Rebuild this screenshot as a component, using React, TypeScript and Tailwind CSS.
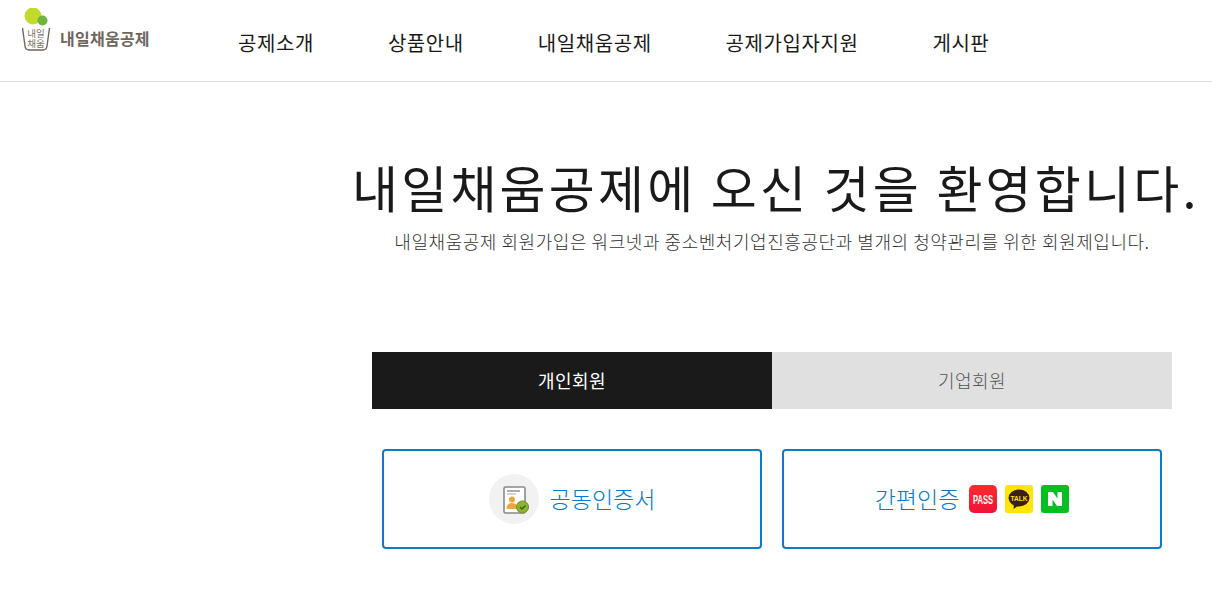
const font = "font-['Noto_Sans_CJK_KR','Noto_Sans',sans-serif]";

function Logo() {
  return (
    <div className="flex items-start w-[238px] pl-[22px] pt-[8px] shrink-0">
      <svg width="30" height="44" viewBox="0 0 30 44" className="shrink-0">
        <path d="M0.5 20 L3 38 Q3.5 42 7 42 H21 Q24.5 42 25 38 L27.5 20" fill="none" stroke="#6f665e" strokeWidth="1.4" />
        <circle cx="11" cy="8" r="8.5" fill="#c2d92e" />
        <circle cx="20.5" cy="12.5" r="5" fill="#6eb43f" />
        <text x="14" y="28.5" textAnchor="middle" fontSize="9.5" fill="#7c7268">내일</text>
        <text x="14" y="38.5" textAnchor="middle" fontSize="9.5" fill="#7c7268">채움</text>
      </svg>
      <span className="ml-[8px] mt-[18px] text-[16px] leading-[24px] font-bold text-[#6f665e] tracking-[0.25px] whitespace-nowrap">
        내일채움공제
      </span>
    </div>
  );
}

function CertIcon() {
  return (
    <div className="w-[50px] h-[50px] rounded-full bg-[#f2f2f2] flex items-center justify-center">
      <svg width="30" height="30" viewBox="0 0 30 30">
        <rect x="5" y="3" width="21" height="26" rx="1.5" fill="#fff" stroke="#8a8a8a" strokeWidth="1.6" />
        <path d="M8 7 H21" stroke="#777" strokeWidth="1.2" />
        <path d="M8 10 H17" stroke="#aaa" strokeWidth="1" />
        <circle cx="13" cy="15.5" r="3" fill="#f0a63c" />
        <path d="M7.5 25 Q7.5 19 13 19 Q18.5 19 18.5 25 Z" fill="#f0a63c" />
        <circle cx="23.5" cy="23" r="6" fill="#8db52f" stroke="#6d8f22" />
        <path d="M21 23 L23 25 L26.5 21.5" fill="none" stroke="#3f5a10" strokeWidth="1.4" />
      </svg>
    </div>
  );
}

function PassIcon() {
  return (
    <div className="w-[28px] h-[28px] rounded-[5px] bg-gradient-to-b from-[#ff2a2a] to-[#f0103a]">
      <svg width="28" height="28" viewBox="0 0 28 28" className="overflow-visible">
        <text x="14" y="18.5" textAnchor="middle" fontSize="12.5" fontWeight="700" fill="#fff" textLength="20" lengthAdjust="spacingAndGlyphs" fontFamily="Liberation Sans, sans-serif">PASS</text>
      </svg>
    </div>
  );
}

function TalkIcon() {
  return (
    <div className="w-[28px] h-[28px] rounded-[3px] bg-[#ffe600] flex items-center justify-center">
      <svg width="24" height="24" viewBox="0 0 24 24" className="overflow-visible">
        <ellipse cx="12" cy="11" rx="10.5" ry="8.5" fill="#3c1e1e" />
        <path d="M7 17 L6.5 22 L12 18 Z" fill="#3c1e1e" />
        <text x="12" y="14" textAnchor="middle" fontSize="8" fontWeight="700" fill="#ffe600" textLength="17" lengthAdjust="spacingAndGlyphs" fontFamily="Liberation Sans, sans-serif">TALK</text>
      </svg>
    </div>
  );
}

function NaverIcon() {
  return (
    <div className="w-[28px] h-[28px] rounded-[3px] bg-[#03c01f] flex items-center justify-center">
      <svg width="16" height="16" viewBox="0 0 16 16">
        <path d="M1 1 H6 L10.5 7.5 V1 H15 V15 H10 L5.5 8.5 V15 H1 Z" fill="#fff" />
      </svg>
    </div>
  );
}

const menus = ["공제소개", "상품안내", "내일채움공제", "공제가입자지원", "게시판"];

export default function App() {
  return (
    <div className={`w-[1212px] h-[600px] overflow-hidden bg-white ${font}`}>
      <header className="flex h-[82px] border-b border-[#e0e0e0]">
        <Logo />
        <nav className="flex gap-[74px] pt-[28px]">
          {menus.map((m) => (
            <a key={m} className="text-[20px] leading-[30px] text-[#1a1a1a] tracking-[0.57px] whitespace-nowrap">
              {m}
            </a>
          ))}
        </nav>
      </header>

      <main className="ml-[372px] w-[800px]">
        <h1 className="mt-[69px] ml-[-20px] w-[841px] text-[50px] leading-[70px] font-normal text-[#1a1a1a] tracking-[3.2px] whitespace-nowrap">
          내일채움공제에 오신 것을 환영합니다.
        </h1>
        <p className="text-center text-[18px] leading-[30px] font-light text-[#333] tracking-[0.55px] mt-[5px]">
          내일채움공제 회원가입은 워크넷과 중소벤처기업진흥공단과 별개의 청약관리를 위한 회원제입니다.
        </p>

        <div className="flex mt-[96px] h-[57px]">
          <div className="flex-1 flex items-center justify-center bg-[#1a1a1a] text-white text-[18px] tracking-[0.5px]">개인회원</div>
          <div className="flex-1 flex items-center justify-center bg-[#e0e0e0] text-[#555] text-[18px] font-light tracking-[0.5px]">기업회원</div>
        </div>

        <div className="flex gap-[20px] px-[10px] mt-[40px]">
          <button className="flex-1 h-[100px] border-2 border-[#0e7cc4] rounded-[4px] flex items-center justify-center gap-[11px] text-[23px] font-light text-[#0878c8]">
            <CertIcon />
            <span className="pb-[2px]">공동인증서</span>
          </button>
          <button className="flex-1 h-[100px] border-2 border-[#0e7cc4] rounded-[4px] flex items-center justify-center text-[23px] font-light text-[#0878c8]">
            <span className="pb-[2px]">간편인증</span>
            <span className="flex gap-[8px] ml-[10px]">
              <PassIcon />
              <TalkIcon />
              <NaverIcon />
            </span>
          </button>
        </div>
      </main>
    </div>
  );
}
